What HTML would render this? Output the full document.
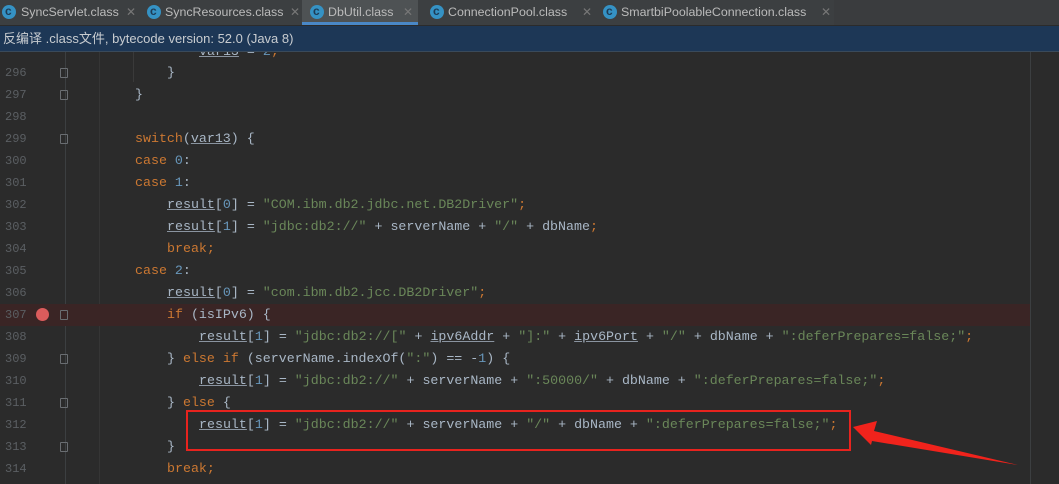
<!DOCTYPE html>
<html><head><meta charset="utf-8"><style>
body{margin:0;width:1059px;height:484px;background:#2b2b2b;overflow:hidden;position:relative;font-family:"Liberation Sans","Noto Sans CJK SC",sans-serif}
#tabs{position:absolute;left:0;top:0;width:1059px;height:25px;background:#3c3f41}
.tab{position:absolute;top:0;height:25px;color:#bbbbbb;font-size:12.4px;line-height:24px;white-space:nowrap}
.tab .ic{position:absolute;left:0;top:5px;width:14px;height:14px;border-radius:50%;background:#3592c4}
.tab .ic:after{content:"c";position:absolute;left:3px;top:-6px;color:#1d3b55;font-size:12px;font-weight:bold}
.tab .x{color:#777;font-size:12px;position:absolute}
#info{position:absolute;left:0;top:26px;width:1059px;height:26px;background:#1d3756;color:#c8ccd0;font-size:13px;line-height:26px;padding-left:3px;border-bottom:1px solid #3a4a5a;box-sizing:border-box}
.ln{position:absolute;left:5px;width:24px;color:#5b5f63;font-family:"Liberation Mono",monospace;font-size:12px;height:22px;line-height:22px}
.code{position:absolute;left:0;font-family:"Liberation Mono",monospace;font-size:13.3px;color:#a9b7c6;white-space:pre;height:22px;line-height:22px}
.k{color:#cc7832}.s{color:#6a8759}.n{color:#6897bb}.u{text-decoration:underline;text-decoration-color:#8a94a0}
.fold{position:absolute;left:60px;width:8px;height:10px;border:1px solid #6a6e72;border-radius:1px;box-sizing:border-box}
</style></head><body>
<div id="tabs">
<div class="tab" style="left:2px;width:140px"><span class="ic"></span><span style="position:absolute;left:19px">SyncServlet.class</span><span class="x" style="left:124px">✕</span></div>
<div class="tab" style="left:147px;width:150px"><span class="ic"></span><span style="position:absolute;left:18px">SyncResources.class</span><span class="x" style="left:143px">✕</span></div>
<div class="tab" style="left:302px;width:116px;background:#4e5254;border-bottom:3px solid #4a88c7;box-sizing:border-box"><span class="ic" style="left:8px"></span><span style="position:absolute;left:26px">DbUtil.class</span><span class="x" style="left:101px">✕</span></div>
<div class="tab" style="left:430px;width:170px"><span class="ic"></span><span style="position:absolute;left:18px">ConnectionPool.class</span><span class="x" style="left:152px">✕</span></div>
<div class="tab" style="left:603px;width:231px"><span class="ic"></span><span style="position:absolute;left:18px">SmartbiPoolableConnection.class</span><span class="x" style="left:218px">✕</span></div>
</div>
<div style="position:absolute;left:834px;top:0;width:225px;height:25px;background:#3a3c3e"></div>
<div id="info">反编译 .class文件, bytecode version: 52.0 (Java 8)</div>

<div style="position:absolute;left:65px;top:52px;width:1px;height:432px;background:#3c3f41"></div>
<div style="position:absolute;left:99px;top:52px;width:1px;height:432px;background:#353535"></div>
<div style="position:absolute;left:133px;top:52px;width:1px;height:30px;background:#3a3a3a"></div>
<div style="position:absolute;left:1030px;top:52px;width:1px;height:432px;background:#3c3f41"></div>

<div style="position:absolute;left:0;top:304px;width:1030px;height:22px;background:#3a2525"></div>
<div style="position:absolute;left:36px;top:308px;width:13px;height:13px;border-radius:50%;background:#db5c5c"></div>

<div class="ln" style="top:62px">296</div><div class="ln" style="top:84px">297</div><div class="ln" style="top:106px">298</div><div class="ln" style="top:128px">299</div><div class="ln" style="top:150px">300</div><div class="ln" style="top:172px">301</div><div class="ln" style="top:194px">302</div><div class="ln" style="top:216px">303</div><div class="ln" style="top:238px">304</div><div class="ln" style="top:260px">305</div><div class="ln" style="top:282px">306</div><div class="ln" style="top:304px">307</div><div class="ln" style="top:326px">308</div><div class="ln" style="top:348px">309</div><div class="ln" style="top:370px">310</div><div class="ln" style="top:392px">311</div><div class="ln" style="top:414px">312</div><div class="ln" style="top:436px">313</div><div class="ln" style="top:458px">314</div>

<div class="fold" style="top:68px"></div><div class="fold" style="top:90px"></div><div class="fold" style="top:134px"></div><div class="fold" style="top:310px"></div><div class="fold" style="top:354px"></div><div class="fold" style="top:398px"></div><div class="fold" style="top:442px"></div>

<div style="position:absolute;left:0;top:52px;width:1030px;height:10px;overflow:hidden"><div class="code" style="top:-11px;left:199px"><span class="u">var13</span> = <span class="n">2</span><span class="k">;</span></div></div>
<div class="code" style="top:62px;left:167px">}</div>
<div class="code" style="top:84px;left:135px">}</div>
<div class="code" style="top:128px;left:135px"><span class="k">switch</span>(<span class="u">var13</span>) {</div>
<div class="code" style="top:150px;left:135px"><span class="k">case </span><span class="n">0</span>:</div>
<div class="code" style="top:172px;left:135px"><span class="k">case </span><span class="n">1</span>:</div>
<div class="code" style="top:194px;left:167px"><span class="u">result</span>[<span class="n">0</span>] = <span class="s">"COM.ibm.db2.jdbc.net.DB2Driver"</span><span class="k">;</span></div>
<div class="code" style="top:216px;left:167px"><span class="u">result</span>[<span class="n">1</span>] = <span class="s">"jdbc:db2://"</span> + serverName + <span class="s">"/"</span> + dbName<span class="k">;</span></div>
<div class="code" style="top:238px;left:167px"><span class="k">break;</span></div>
<div class="code" style="top:260px;left:135px"><span class="k">case </span><span class="n">2</span>:</div>
<div class="code" style="top:282px;left:167px"><span class="u">result</span>[<span class="n">0</span>] = <span class="s">"com.ibm.db2.jcc.DB2Driver"</span><span class="k">;</span></div>
<div class="code" style="top:304px;left:167px"><span class="k">if </span>(isIPv6) {</div>
<div class="code" style="top:326px;left:199px"><span class="u">result</span>[<span class="n">1</span>] = <span class="s">"jdbc:db2://["</span> + <span class="u">ipv6Addr</span> + <span class="s">"]:"</span> + <span class="u">ipv6Port</span> + <span class="s">"/"</span> + dbName + <span class="s">":deferPrepares=false;"</span><span class="k">;</span></div>
<div class="code" style="top:348px;left:167px">} <span class="k">else if </span>(serverName.indexOf(<span class="s">":"</span>) == -<span class="n">1</span>) {</div>
<div class="code" style="top:370px;left:199px"><span class="u">result</span>[<span class="n">1</span>] = <span class="s">"jdbc:db2://"</span> + serverName + <span class="s">":50000/"</span> + dbName + <span class="s">":deferPrepares=false;"</span><span class="k">;</span></div>
<div class="code" style="top:392px;left:167px">} <span class="k">else </span>{</div>
<div class="code" style="top:414px;left:199px"><span class="u">result</span>[<span class="n">1</span>] = <span class="s">"jdbc:db2://"</span> + serverName + <span class="s">"/"</span> + dbName + <span class="s">":deferPrepares=false;"</span><span class="k">;</span></div>
<div class="code" style="top:436px;left:167px">}</div>
<div class="code" style="top:458px;left:167px"><span class="k">break;</span></div>

<div style="position:absolute;left:186px;top:410px;width:665px;height:41px;border:2px solid #e8231e;box-sizing:border-box"></div>
<svg style="position:absolute;left:0;top:0" width="1059" height="484"><polygon points="853,427 877,421 874,431 1018,465 872,441 871,445" fill="#f0231c"/></svg>
</body></html>
